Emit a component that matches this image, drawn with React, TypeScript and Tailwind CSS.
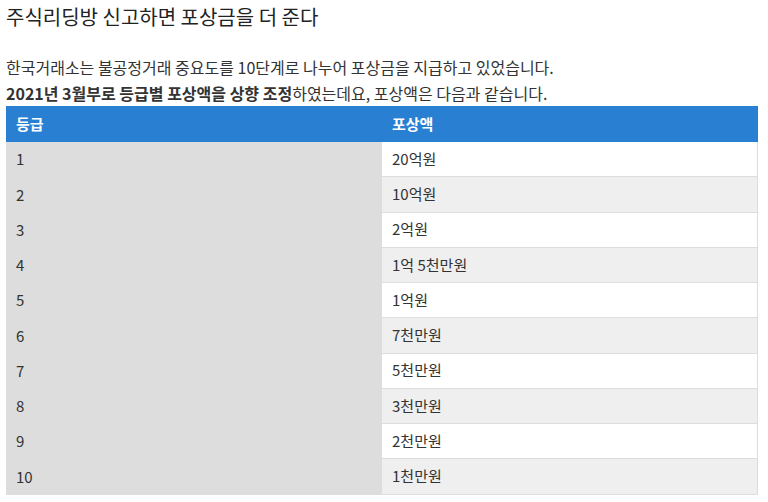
import React from "react";

const rows: [string, string][] = [
  ["1", "20억원"],
  ["2", "10억원"],
  ["3", "2억원"],
  ["4", "1억 5천만원"],
  ["5", "1억원"],
  ["6", "7천만원"],
  ["7", "5천만원"],
  ["8", "3천만원"],
  ["9", "2천만원"],
  ["10", "1천만원"],
];

export default function App() {
  return (
    <div
      className="w-[768px] h-[502px] bg-white text-[#333] overflow-hidden"
      style={{ fontFamily: '"Noto Sans CJK KR", "Noto Sans", sans-serif' }}
    >
      <div className="px-[6px]">
        <h1 className="text-[20px] leading-[34px] font-normal text-[#222]">
          주식리딩방 신고하면 포상금을 더 준다
        </h1>
        <div className="mt-[20px] text-[16px] leading-[26px]">
          <p>한국거래소는 불공정거래 중요도를 10단계로 나누어 포상금을 지급하고 있었습니다.</p>
          <p>
            <strong className="font-bold">2021년 3월부로 등급별 포상액을 상향 조정</strong>하였는데요, 포상액은 다음과 같습니다.
          </p>
        </div>
        <div className="w-[752px] text-[15px]">
          <div className="grid grid-cols-2 h-[36px] bg-[#2980d3] text-white font-bold items-center">
            <div className="pl-[10px]">등급</div>
            <div className="pl-[10px]">포상액</div>
          </div>
          {rows.map(([g, v], i) => (
            <div key={g} className="grid grid-cols-2 h-[35.25px]">
              <div className="bg-[#dcdddc] pl-[10px] flex items-center">{g}</div>
              <div
                className={`pl-[10px] flex items-center border-b border-r border-[#dddddd] ${
                  i % 2 === 0 ? "bg-white" : "bg-[#efefef]"
                }`}
              >
                {v}
              </div>
            </div>
          ))}
        </div>
      </div>
    </div>
  );
}
